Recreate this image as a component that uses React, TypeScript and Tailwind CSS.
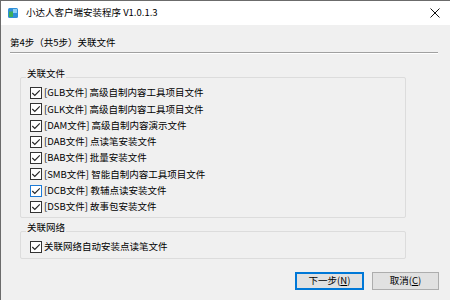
const font = { fontFamily: '"Noto Sans CJK SC", "Liberation Sans", sans-serif' };

function Check({ hover = false }: { hover?: boolean }) {
  return (
    <svg width="12" height="12" viewBox="0 0 12 12" className="shrink-0">
      <rect x="0.5" y="0.5" width="11" height="11" fill="#fff" stroke={hover ? "#1e7bd6" : "#333"} />
      <path d="M2.3 6 L4.8 8.5 L9.8 3.3" fill="none" stroke="#222" strokeWidth="1.1" />
    </svg>
  );
}

function Row({ label, hover }: { label: string; hover?: boolean }) {
  return (
    <div className="flex h-[16.25px] items-center gap-[2px]">
      <Check hover={hover} />
      <span className="text-[9.5px] leading-none text-black">{label}</span>
    </div>
  );
}

const files = [
  "[GLB文件] 高级自制内容工具项目文件",
  "[GLK文件] 高级自制内容工具项目文件",
  "[DAM文件] 高级自制内容演示文件",
  "[DAB文件] 点读笔安装文件",
  "[BAB文件] 批量安装文件",
  "[SMB文件] 智能自制内容工具项目文件",
  "[DCB文件] 教辅点读安装文件",
  "[DSB文件] 故事包安装文件",
];

export default function App() {
  return (
    <div className="h-[300px] w-[450px] overflow-hidden border-l border-t border-[#6b6b6b] bg-[#f0f0f0]" style={font}>
      <div className="flex h-[24px] items-center bg-white pl-[7px] pr-[10px]">
        <svg width="10" height="10" viewBox="0 0 10 10">
          <rect x="0" y="0" width="10" height="10" rx="1.5" fill="#2f8fd8" />
          <rect x="1" y="3.5" width="4" height="5.5" fill="#3cae5a" />
          <rect x="5" y="1" width="4" height="4" fill="#8fd0f5" />
        </svg>
        <span className="ml-[8px] text-[9.5px] leading-none text-black">小达人客户端安装程序 V1.0.1.3</span>
        <svg className="ml-auto" width="10" height="10" viewBox="0 0 10 10">
          <path d="M0.5 0.5 L9.5 9.5 M9.5 0.5 L0.5 9.5" stroke="#111" strokeWidth="1" />
        </svg>
      </div>
      <div className="pl-[9px] pt-[10px]">
        <div className="text-[9.5px] leading-[14px] text-black">第4步（共5步）关联文件</div>
        <div className="mt-[3px] h-[2px] w-[428px] border-t border-b border-t-[#a0a0a0] border-b-white" />
      </div>
      <div className="ml-[19px] mt-[23px] w-[386px]">
        <div className="relative h-[141px] rounded-[2px] border border-[#dcdcdc] pl-[9px] pt-[7px]">
          <span className="absolute -top-[12px] left-[5px] bg-[#f0f0f0] px-[1px] text-[9.5px] leading-[14px] text-black">关联文件</span>
          {files.map((f, i) => (
            <Row key={f} label={f} hover={i === 6} />
          ))}
        </div>
        <div className="relative mt-[13px] h-[28px] rounded-[2px] border border-[#dcdcdc] pl-[9px] pt-[7px]">
          <span className="absolute -top-[12px] left-[5px] bg-[#f0f0f0] px-[1px] text-[9.5px] leading-[14px] text-black">关联网络</span>
          <Row label="关联网络自动安装点读笔文件" />
        </div>
      </div>
      <div className="mt-[13px] flex justify-end gap-[8px] pr-[11px]">
        <button className="h-[18px] w-[69px] border border-[#0078d7] bg-[#e1e1e1] text-[9.5px] leading-none text-black shadow-[inset_0_0_0_1px_#0078d7]">
          下一步(<span className="underline">N</span>)
        </button>
        <button className="h-[18px] w-[67px] border border-[#adadad] bg-[#e1e1e1] text-[9.5px] leading-none text-black">
          取消(<span className="underline">C</span>)
        </button>
      </div>
    </div>
  );
}
